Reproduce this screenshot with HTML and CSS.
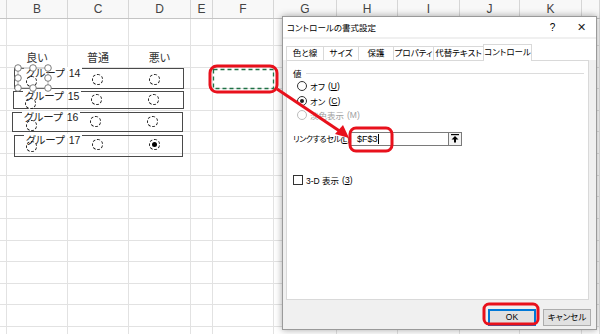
FILE: index.html
```html
<!DOCTYPE html>
<html lang="ja">
<head>
  <meta charset="UTF-8" />
  <title>コントロールの書式設定</title>
  <link rel="stylesheet" href="styles.css">
</head>
<body>
  <div class="sheet">
    <div class="heads" id="heads"></div>
    <div id="rows"></div>
  </div>

  <div class="group g14">
    <span class="radio rb"></span>
    <span class="label">グループ 14</span>
    <span class="radio rc"></span>
    <span class="radio rd"></span>
  </div>
  <div class="group g15">
    <span class="radio rb"></span>
    <span class="label">グループ 15</span>
    <span class="radio rc"></span>
    <span class="radio rd"></span>
  </div>
  <div class="group g16">
    <span class="radio rb"></span>
    <span class="label">グループ 16</span>
    <span class="radio rc"></span>
    <span class="radio rd"></span>
  </div>
  <div class="group g17">
    <span class="radio rb"></span>
    <span class="label">グループ 17</span>
    <span class="radio rc"></span>
    <span class="radio rd on"></span>
  </div>

  <div class="dialog">
    <div class="titlebar">
      <span class="title">コントロールの書式設定</span>
      <span class="tb-btn">?</span>
      <span class="tb-btn close">✕</span>
    </div>
    <div class="tabs">
      <span class="tab" style="width:37px">色と線</span>
      <span class="tab" style="width:35px">サイズ</span>
      <span class="tab" style="width:35px">保護</span>
      <span class="tab" style="width:40px">プロパティ</span>
      <span class="tab" style="width:50px">代替テキスト</span>
      <span class="tab active" style="width:49px">コントロール</span>
    </div>
    <div class="panel">
      <div class="legend"><span>値</span><i></i></div>
      <div class="opt"><span class="dradio"></span>オフ<span class="key">(<u>U</u>)</span></div>
      <div class="opt"><span class="dradio on"></span>オン<span class="key">(<u>C</u>)</span></div>
      <div class="opt off"><span class="dradio"></span>淡色表示<span class="key">(M)</span></div>
      <div class="link">
        <span class="link-label">リンクするセル<span class="key">(<u>L</u>):</span></span>
        <span class="input">$F$3<b class="caret"></b></span>
        <span class="pick">
          <svg width="12" height="11" viewBox="0 0 12 11"><rect x="2" y="1" width="8" height="1.2" fill="#000"/><path d="M6 3 L9.5 6.5 L7 6.5 L7 9.5 L5 9.5 L5 6.5 L2.5 6.5 Z" fill="#000"/></svg>
        </span>
      </div>
      <div class="check"><span class="box"></span>3-D 表示<span class="key">(<u>3</u>)</span></div>
    </div>
    <div class="footer">
      <span class="btn default">OK</span>
      <span class="btn">キャンセル</span>
    </div>
  </div>

  <svg class="marks" width="600" height="334" viewBox="0 0 600 334">
    <rect x="213.5" y="69.5" width="60" height="19" fill="none" stroke="#1e7145" stroke-width="1.3" stroke-dasharray="4 3"/>
    <rect x="18" y="68" width="30" height="20" fill="none" stroke="#9a9a9a" stroke-width="0.8"/>
    <g fill="#fff" stroke="#6e6e6e" stroke-width="0.9">
      <circle cx="18" cy="68" r="3.3"/><circle cx="33" cy="68" r="3.3"/><circle cx="48" cy="68" r="3.3"/>
      <circle cx="18" cy="78" r="3.3"/><circle cx="48" cy="78" r="3.3"/>
      <circle cx="18" cy="88" r="3.3"/><circle cx="33" cy="88" r="3.3"/><circle cx="48" cy="88" r="3.3"/>
    </g>
    <g fill="none" stroke="#e8111c" stroke-width="3">
      <rect x="210" y="66" width="67" height="26" rx="7"/>
      <rect x="350" y="128" width="42" height="23" rx="6"/>
      <rect x="484" y="304" width="54" height="20" rx="5"/>
      <line x1="277" y1="89" x2="341" y2="132"/>
    </g>
    <path d="M349 138 L335 134 L343 125 Z" fill="#e8111c"/>
  </svg>

  <script>
    const cols = ["", "B", "C", "D", "E", "F", "G", "H", "I", "J", "K", ""];
    const heights = [27, 22, 21, 22, 21, 22, 22, 21, 22, 22, 21, 22, 21, 22, 22];
    const heads = document.getElementById("heads");
    cols.forEach(c => {
      const d = document.createElement("div");
      d.className = "head";
      d.textContent = c;
      heads.appendChild(d);
    });

    const rows = document.getElementById("rows");
    heights.forEach((h, i) => {
      const row = document.createElement("div");
      row.className = "row";
      row.style.height = h + "px";
      cols.forEach((c, j) => {
        const cell = document.createElement("div");
        cell.className = "cell";
        if (i === 1 && j === 1) cell.textContent = "良い";
        if (i === 1 && j === 2) cell.textContent = "普通";
        if (i === 1 && j === 3) cell.textContent = "悪い";
        row.appendChild(cell);
      });
      rows.appendChild(row);
    });
  </script>
</body>
</html>
```

FILE: styles.css
```css
body {
  margin: 0;
  width: 600px;
  height: 334px;
  overflow: hidden;
  position: relative;
  background: #fff;
  font-family: "Liberation Sans", "Noto Sans CJK JP", sans-serif;
  font-feature-settings: "palt";
  color: #000;
}
.heads, .row {
  display: grid;
  grid-template-columns: 7px 61px 61px 62px 22px 61px 63px 61px 62px 60px 62px 1fr;
}
.heads {
  height: 19px;
  box-sizing: border-box;
  background: #f8f8f8;
  border-bottom: 1px solid #c4c4c4;
}
.head {
  border-right: 1px solid #d6d6d6;
  font-size: 12px;
  line-height: 18px;
  color: #444;
  text-align: center;
}
.cell {
  box-sizing: border-box;
  border-right: 1px solid #e2e2e2;
  border-bottom: 1px solid #e2e2e2;
  font-size: 11px;
  color: #333;
  display: flex;
  align-items: center;
  justify-content: center;
}

/* form controls on the sheet */
.group {
  position: absolute;
  border: 1px solid #4a4a4a;
  box-sizing: border-box;
}
.g14 { left: 14px; top: 68px; width: 170px; height: 21px; }
.g15 { left: 13px; top: 91px; width: 171px; height: 18px; }
.g16 { left: 12px; top: 112px; width: 171px; height: 20px; }
.g17 { left: 14px; top: 135px; width: 169px; height: 22px; }
.label {
  position: absolute;
  left: 9px;
  top: -2px;
  padding: 0 2px;
  font-size: 10.5px;
  line-height: 13px;
  word-spacing: 1px;
  white-space: nowrap;
  color: #222;
  background: linear-gradient(#fff 0 4px, transparent 4px);
}
.radio {
  position: absolute;
  width: 9px;
  height: 9px;
  border: 1px dashed #222;
  border-radius: 50%;
  background: #fff;
}
.rc { left: 77px; top: 5px; }
.rd { left: 134px; top: 5px; }
.rb { left: 11px; top: 7px; }
.g15 .rc, .g15 .rd { top: 2px; }
.g15 .rb { top: 6px; }
.g16 .rc, .g16 .rd { top: 3px; }
.g16 .rb { top: 7px; left: 13px; }
.g17 .rc, .g17 .rd { top: 3px; }
.g17 .rb { top: 5px; }
.radio.on::after {
  content: "";
  position: absolute;
  left: 2px;
  top: 2px;
  width: 5px;
  height: 5px;
  border-radius: 50%;
  background: #000;
}

/* dialog */
.dialog {
  position: absolute;
  left: 282px;
  top: 16px;
  width: 315px;
  height: 314px;
  box-sizing: border-box;
  border: 1px solid #9a9a9a;
  background: #f0f0f0;
  box-shadow: 0 0 7px rgba(0,0,0,0.35);
  display: flex;
  flex-direction: column;
  font-size: 8.5px;
  white-space: nowrap;
}
.key {
  font-family: "Liberation Sans", sans-serif;
  font-feature-settings: normal;
}
.titlebar {
  height: 20px;
  background: #fff;
  display: flex;
  align-items: center;
  padding: 0 0 0 4px;
}
.title {
  flex: 1;
}
.tb-btn {
  width: 29px;
  text-align: center;
  font-size: 10px;
}
.close {
  font-size: 11px;
  color: #222;
}
.tabs {
  display: flex;
  align-items: flex-end;
  height: 21px;
  padding: 0 0 0 3px;
  margin-top: 2px;
  background: #fff;
}
.tab {
  height: 14px;
  box-sizing: border-box;
  border: 1px solid #d9d9d9;
  border-right: none;
  border-bottom: none;
  background: #fff;
  text-align: center;
  line-height: 13px;
  overflow: hidden;
}
.tab.active {
  height: 17px;
  margin-bottom: -1px;
  border-right: 1px solid #d9d9d9;
  line-height: 15px;
  position: relative;
}
.panel {
  height: 240px;
  margin: 0 7px 0 3px;
  border: 1px solid #d9d9d9;
  background: #fff;
  box-sizing: border-box;
  padding: 6px 0 0 6px;
  display: flex;
  flex-direction: column;
}
.legend {
  display: flex;
  align-items: center;
  gap: 4px;
  height: 12px;
  margin-right: 4px;
}
.legend i {
  flex: 1;
  border-top: 1px solid #dcdcdc;
}
.opt {
  display: flex;
  align-items: center;
  gap: 3px;
  height: 14.5px;
  padding-left: 4px;
}
.opt:first-of-type { margin-top: 5px; }
.opt.off { color: #a0a0a0; }
.dradio {
  width: 8px;
  height: 8px;
  border: 1px solid #333;
  border-radius: 50%;
  position: relative;
  background: #fff;
}
.opt.off .dradio { border-color: #bcbcbc; }
.dradio.on::after {
  content: "";
  position: absolute;
  left: 2px;
  top: 2px;
  width: 4px;
  height: 4px;
  border-radius: 50%;
  background: #222;
}
.link {
  display: flex;
  align-items: center;
  margin-top: 9px;
  height: 14px;
}
.link-label {
  width: 57px;
  font-size: 8px;
  letter-spacing: -0.4px;
}
.input {
  width: 98px;
  height: 14px;
  box-sizing: border-box;
  border: 1px solid #7a7a7a;
  border-right: none;
  padding-left: 6px;
  font-size: 9px;
  display: flex;
  align-items: center;
}
.caret {
  width: 1px;
  height: 10px;
  background: #000;
}
.pick {
  width: 14px;
  height: 14px;
  box-sizing: border-box;
  border: 1px solid #7a7a7a;
  background: #f3f3f3;
  display: flex;
  align-items: center;
  justify-content: center;
}
.check {
  display: flex;
  align-items: center;
  gap: 3px;
  margin-top: 28px;
  height: 12px;
}
.box {
  width: 8px;
  height: 8px;
  border: 1px solid #333;
  background: #fff;
}
.footer {
  display: flex;
  justify-content: flex-end;
  gap: 7px;
  padding: 9px 5px 0 0;
}
.btn {
  width: 48px;
  height: 17px;
  box-sizing: border-box;
  border: 1px solid #adadad;
  background: #e1e1e1;
  text-align: center;
  line-height: 15px;
}
.btn.default {
  border: 2px solid #0078d7;
  line-height: 13px;
}

.marks {
  position: absolute;
  left: 0;
  top: 0;
  pointer-events: none;
}
```
